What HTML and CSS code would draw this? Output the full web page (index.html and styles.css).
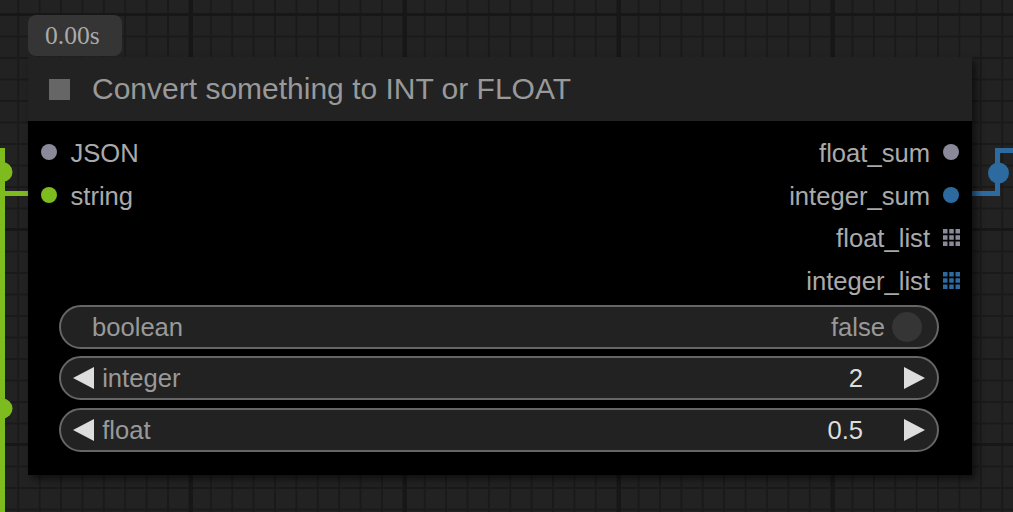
FILE: index.html
```html
<!DOCTYPE html>
<html>
<head>
<meta charset="utf-8">
<link rel="stylesheet" href="styles.css">
</head>
<body>
<div class="canvas">
  <svg class="links" width="1013" height="512" viewBox="0 0 1013 512">
    <g class="link-green">
      <path d="M2.5 148 V512" />
      <path d="M0 193.5 H30" />
      <circle cx="2.5" cy="172" r="10" />
      <circle cx="2.5" cy="408.5" r="10" />
    </g>
    <g class="link-blue">
      <path d="M970 193.5 H997.5 V150.5 H1013" />
      <circle cx="998.5" cy="173" r="10.5" />
    </g>
  </svg>

  <div class="node">
    <div class="badge">0.00s</div>
    <div class="node-title">
      <span class="title-box"></span>
      <span class="title-text">Convert something to INT or FLOAT</span>
    </div>
    <div class="node-body">
      <div class="slots">
        <div class="inputs">
          <div class="slot slot-in"><span class="dot dot-gray"></span><span class="slot-label">JSON</span></div>
          <div class="slot slot-in"><span class="dot dot-green"></span><span class="slot-label">string</span></div>
        </div>
        <div class="outputs">
          <div class="slot slot-out"><span class="slot-label">float_sum</span><span class="dot dot-gray"></span></div>
          <div class="slot slot-out"><span class="slot-label">integer_sum</span><span class="dot dot-blue"></span></div>
          <div class="slot slot-out slot-list"><span class="slot-label">float_list</span>
            <svg class="grid-icon grid-gray" width="17" height="17" viewBox="0 0 17 17"><rect x="0" y="0" width="4.5" height="4.5"/><rect x="6.25" y="0" width="4.5" height="4.5"/><rect x="12.5" y="0" width="4.5" height="4.5"/><rect x="0" y="6.25" width="4.5" height="4.5"/><rect x="6.25" y="6.25" width="4.5" height="4.5"/><rect x="12.5" y="6.25" width="4.5" height="4.5"/><rect x="0" y="12.5" width="4.5" height="4.5"/><rect x="6.25" y="12.5" width="4.5" height="4.5"/><rect x="12.5" y="12.5" width="4.5" height="4.5"/></svg>
          </div>
          <div class="slot slot-out slot-list"><span class="slot-label">integer_list</span>
            <svg class="grid-icon grid-blue" width="17" height="17" viewBox="0 0 17 17"><rect x="0" y="0" width="4.5" height="4.5"/><rect x="6.25" y="0" width="4.5" height="4.5"/><rect x="12.5" y="0" width="4.5" height="4.5"/><rect x="0" y="6.25" width="4.5" height="4.5"/><rect x="6.25" y="6.25" width="4.5" height="4.5"/><rect x="12.5" y="6.25" width="4.5" height="4.5"/><rect x="0" y="12.5" width="4.5" height="4.5"/><rect x="6.25" y="12.5" width="4.5" height="4.5"/><rect x="12.5" y="12.5" width="4.5" height="4.5"/></svg>
          </div>
        </div>
      </div>
      <div class="widgets">
        <div class="widget widget-toggle">
          <span class="w-label">boolean</span>
          <span class="w-spacer"></span>
          <span class="w-toggle-value">false</span>
          <span class="toggle-knob"></span>
        </div>
        <div class="widget widget-number">
          <svg class="arrow arrow-left" width="21" height="22" viewBox="0 0 21 22"><polygon points="21,0 21,22 0,11"/></svg>
          <span class="w-label">integer</span>
          <span class="w-spacer"></span>
          <span class="w-value">2</span>
          <svg class="arrow arrow-right" width="21" height="22" viewBox="0 0 21 22"><polygon points="0,0 0,22 21,11"/></svg>
        </div>
        <div class="widget widget-number">
          <svg class="arrow arrow-left" width="21" height="22" viewBox="0 0 21 22"><polygon points="21,0 21,22 0,11"/></svg>
          <span class="w-label">float</span>
          <span class="w-spacer"></span>
          <span class="w-value">0.5</span>
          <svg class="arrow arrow-right" width="21" height="22" viewBox="0 0 21 22"><polygon points="0,0 0,22 21,11"/></svg>
        </div>
      </div>
    </div>
  </div>
</div>
</body>
</html>
```

FILE: styles.css
```css
html, body {
  margin: 0;
  padding: 0;
  width: 1013px;
  height: 512px;
  overflow: hidden;
  background: #222;
}

.canvas {
  position: relative;
  width: 1013px;
  height: 512px;
  overflow: hidden;
  background-color: #222222;
  background-image:
    linear-gradient(to right, #171717 0, #171717 4px, transparent 4px),
    linear-gradient(to bottom, #171717 0, #171717 3px, transparent 3px),
    linear-gradient(to right, #1a1a1a 0, #1a1a1a 2px, transparent 2px),
    linear-gradient(to bottom, #1a1a1a 0, #1a1a1a 2px, transparent 2px);
  background-size:
    214px 100%,
    100% 215px,
    21.4px 100%,
    100% 21.5px;
  background-position:
    189px 0,
    0 13px,
    17.3px 0,
    0 14px;
  font-family: "Liberation Sans", Arial, sans-serif;
}

.links {
  position: absolute;
  left: 0;
  top: 0;
}

.link-green path {
  stroke: #7dbb1e;
  stroke-width: 5;
  fill: none;
}
.link-green circle { fill: #7dbb1e; }

.link-blue path {
  stroke: #2c6aa0;
  stroke-width: 5;
  fill: none;
  stroke-linejoin: miter;
}
.link-blue circle { fill: #2c6aa0; }

.node {
  position: absolute;
  left: 28px;
  top: 57px;
  width: 944px;
  box-shadow: 4px 4px 7px rgba(0, 0, 0, 0.55);
}

.badge {
  position: absolute;
  left: 0;
  top: -42px;
  width: 94px;
  height: 41px;
  box-sizing: border-box;
  padding-left: 17px;
  border-radius: 8px;
  background: #353535;
  color: #aaaaaa;
  font-family: "Liberation Serif", "Times New Roman", serif;
  font-size: 25.6px;
  line-height: 41px;
}

.node-title {
  height: 64px;
  background: #222222;
  display: flex;
  align-items: center;
  padding-left: 21px;
  gap: 22px;
}

.title-box {
  width: 21px;
  height: 21px;
  background: #666666;
  flex: none;
}

.title-text {
  color: #999999;
  font-size: 30px;
  line-height: 64px;
  white-space: nowrap;
}

.node-body {
  background: #000;
  padding: 10px 0 23px;
}

.slots {
  display: flex;
  justify-content: space-between;
}

.inputs, .outputs {
  display: flex;
  flex-direction: column;
}

.slot {
  height: 42.6px;
  display: flex;
  align-items: center;
  font-size: 25.6px;
  color: #aaaaaa;
  white-space: nowrap;
}

.slot-label {
  padding-top: 2px;
  line-height: 28px;
}

.slot-in {
  padding-left: 12.5px;
  gap: 14px;
}

.slot-out {
  justify-content: flex-end;
  padding-right: 13px;
  gap: 13px;
}

.slot-list {
  padding-right: 12px;
}

.dot {
  width: 16px;
  height: 16px;
  border-radius: 50%;
  flex: none;
}
.dot-gray { background: #8a899a; }
.dot-green { background: #7dbb1e; }
.dot-blue { background: #2c6aa0; }

.grid-icon { flex: none; display: block; }
.grid-gray rect { fill: #8a899a; }
.grid-blue rect { fill: #2c6aa0; }

.widgets {
  margin-top: 3.6px;
  display: flex;
  flex-direction: column;
  gap: 7.5px;
}

.widget {
  height: 44px;
  margin: 0 33px 0 31px;
  box-sizing: border-box;
  border: 2px solid #666666;
  border-radius: 22px;
  background: #222222;
  display: flex;
  align-items: center;
  font-size: 25.6px;
  white-space: nowrap;
}

.w-spacer { flex: 1; }

.w-label {
  color: #999999;
  line-height: 28px;
}

.widget-toggle {
  padding-left: 31px;
  padding-right: 15px;
}

.w-toggle-value {
  color: #999999;
  line-height: 28px;
}

.toggle-knob {
  width: 30px;
  height: 30px;
  border-radius: 50%;
  background: #353535;
  margin-left: 7px;
  flex: none;
}

.widget-number {
  padding-left: 11.7px;
  padding-right: 12px;
}

.arrow {
  display: block;
  flex: none;
}
.arrow polygon { fill: #dddddd; }

.arrow-left { margin-right: 8.5px; }
.arrow-right { margin-left: 41px; }

.w-value {
  color: #dddddd;
  line-height: 28px;
}
```
